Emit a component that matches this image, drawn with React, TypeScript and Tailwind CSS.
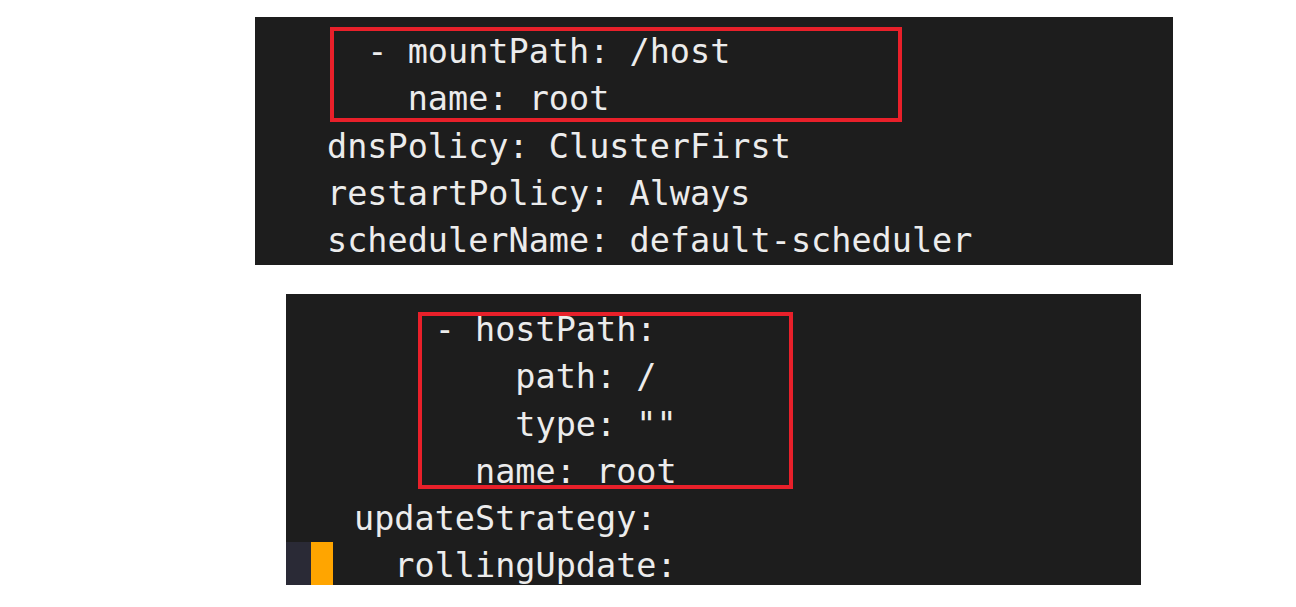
const mono = "font-['DejaVu_Sans_Mono','Liberation_Mono',monospace]";

function Line({ text }: { text: string }) {
  return <div className="h-[47.3px] leading-[47.3px] whitespace-pre">{text}</div>;
}

export default function App() {
  return (
    <div className="w-[1296px] h-[607px] bg-white overflow-hidden">
      {/* top snippet: container volumeMounts */}
      <div
        className={`relative ml-[255px] mt-[17px] w-[918px] h-[248px] bg-[#1d1d1d] text-[#ececec] text-[33.5px] pl-[72px] pt-[11px] overflow-hidden ${mono}`}
      >
        <Line text="  - mountPath: /host" />
        <Line text="    name: root" />
        <Line text="dnsPolicy: ClusterFirst" />
        <Line text="restartPolicy: Always" />
        <Line text="schedulerName: default-scheduler" />
        <div className="absolute left-[75px] top-[10px] w-[572px] h-[95px] border-4 border-[#e8202a]" />
      </div>

      {/* bottom snippet: volumes */}
      <div
        className={`relative ml-[286px] mt-[29px] w-[855px] h-[291px] bg-[#1d1d1d] text-[#ececec] text-[33.5px] pt-[12px] overflow-hidden ${mono}`}
      >
        <div className="pl-[68px]">
          <Line text="    - hostPath:" />
          <Line text={'        path: /'} />
          <Line text={'        type: ""'} />
          <Line text="      name: root" />
          <Line text="updateStrategy:" />
        </div>
        <div className="flex h-[47.3px]">
          <div className="w-[25px] bg-[#2a2a36]" />
          <div className="w-[22px] bg-[#ffa500]" />
          <div className="pl-[21px] leading-[47.3px] whitespace-pre">  rollingUpdate:</div>
        </div>
        <div className="absolute left-[132px] top-[18px] w-[375px] h-[177px] border-4 border-[#e8202a]" />
      </div>
    </div>
  );
}
